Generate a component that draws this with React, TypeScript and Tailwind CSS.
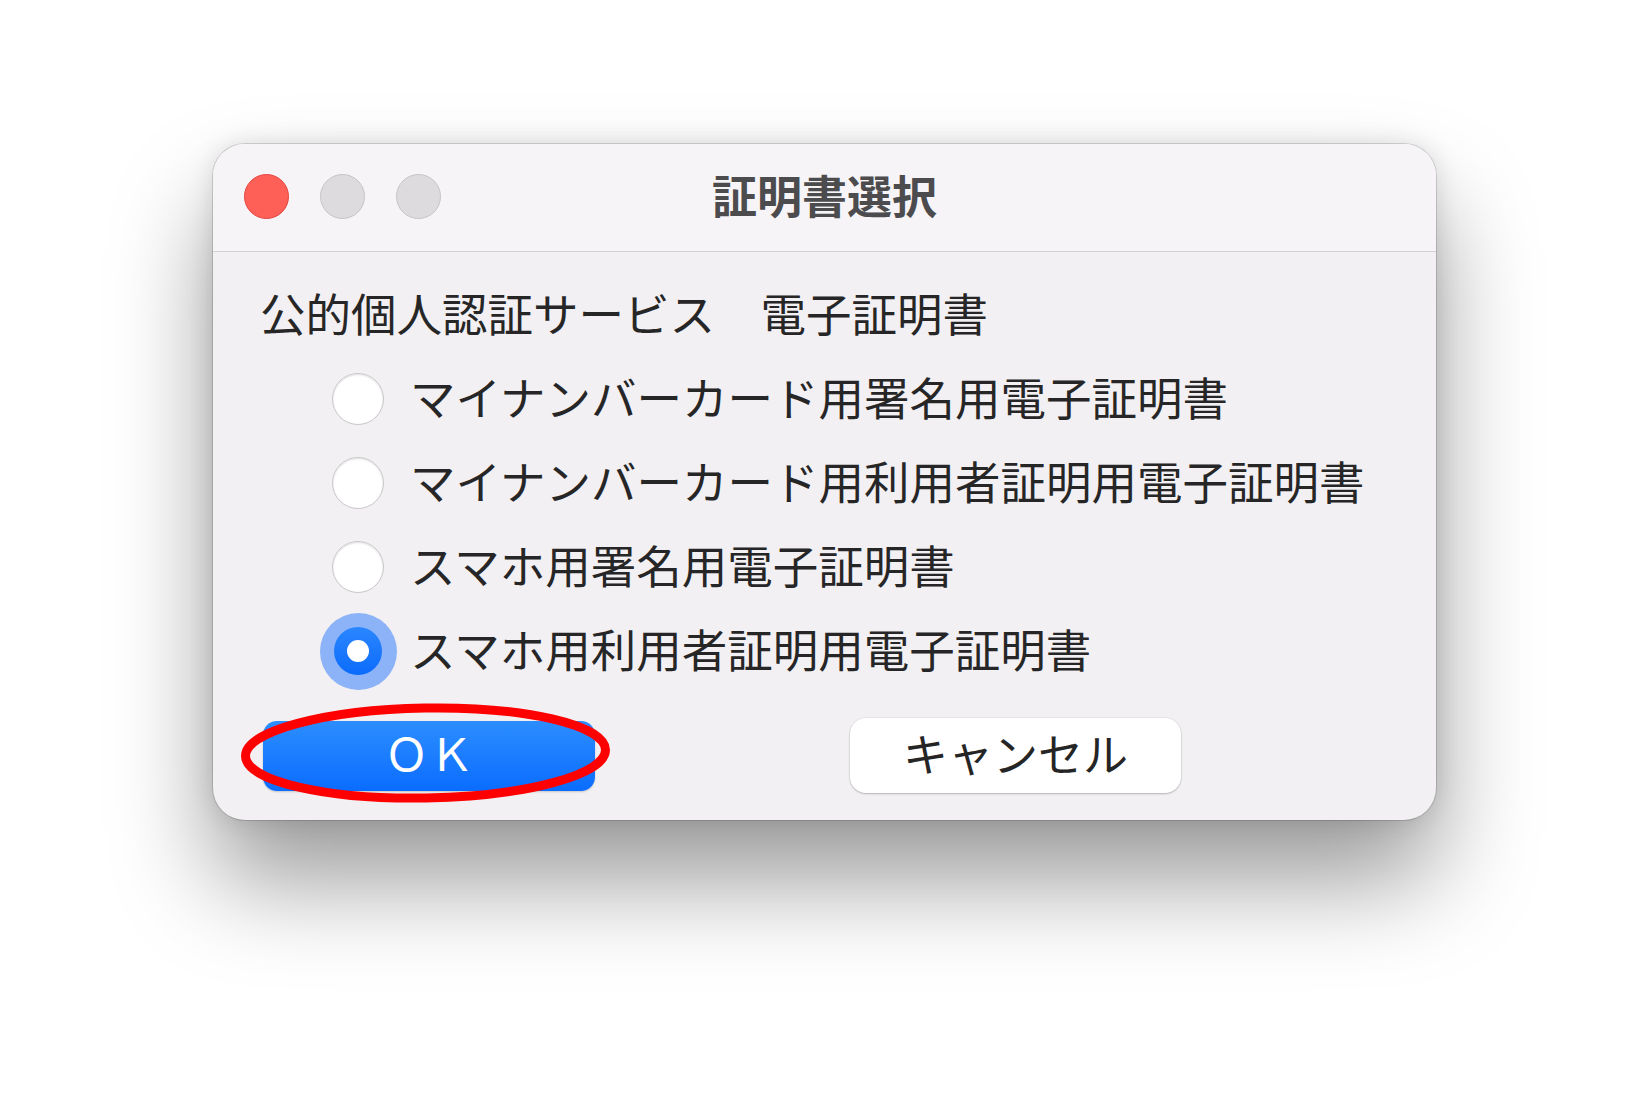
const jp = "font-['Noto_Sans_CJK_JP','Noto_Sans',sans-serif]";

const options = [
  "マイナンバーカード用署名用電子証明書",
  "マイナンバーカード用利用者証明用電子証明書",
  "スマホ用署名用電子証明書",
  "スマホ用利用者証明用電子証明書",
];

function Radio({ checked }: { checked: boolean }) {
  if (checked) {
    return (
      <span className="flex h-[77px] w-[77px] items-center justify-center rounded-full bg-[#7aa8f7]/85">
        <span className="flex h-[48px] w-[48px] items-center justify-center rounded-full bg-gradient-to-b from-[#2a86ff] to-[#0a6bfb]">
          <span className="h-[22px] w-[22px] rounded-full bg-white" />
        </span>
      </span>
    );
  }
  return (
    <span className="h-[52px] w-[52px] rounded-full border-[1.5px] border-[#c9c7ca] bg-white shadow-[inset_0_1px_2px_rgba(0,0,0,0.12)]" />
  );
}

function Light({ color }: { color: "red" | "gray" }) {
  return (
    <span
      className={
        color === "red"
          ? "h-[45px] w-[45px] rounded-full border border-[#e2463f] bg-[#fe5f57]"
          : "h-[45px] w-[45px] rounded-full border border-[#c6c4c7] bg-[#dddbde]"
      }
    />
  );
}

export default function App() {
  return (
    <div className={`min-h-[1103px] w-full bg-white pl-[213px] pt-[144px] ${jp}`}>
      <div className="w-[1223px] overflow-hidden rounded-[32px] bg-[#f2f0f3] shadow-[0_60px_100px_rgba(0,0,0,0.4),0_0_24px_rgba(0,0,0,0.12),0_0_0_1px_rgba(0,0,0,0.14)]">
        {/* title bar */}
        <div className="relative flex h-[108px] items-center border-b border-[#d3d1d4] bg-[#f6f4f7] pl-[31px]">
          <div className="flex gap-[31px] pb-[2px]">
            <Light color="red" />
            <Light color="gray" />
            <Light color="gray" />
          </div>
          <h1 className="absolute inset-x-0 top-[19px] text-center text-[45px] font-bold leading-[64px] text-[#4c4b4d]">
            証明書選択
          </h1>
        </div>

        <div className="pl-[47px] pt-[21px]">
          <p className="flex h-[84px] items-center pb-[5px] text-[45.5px] text-[#272627]">
            公的個人認証サービス　電子証明書
          </p>
          {options.map((label, i) => (
            <div key={label} className="flex h-[84px] items-center">
              <span className="ml-[59px] flex w-[78px] items-center justify-center">
                <Radio checked={i === 3} />
              </span>
              <span className="ml-[13px] pb-[6px] text-[45.5px] text-[#272627]">{label}</span>
            </div>
          ))}

          <div className="mt-[25px] flex items-center pb-[27px] pl-[3px]">
            <div className="relative">
              <button className="flex h-[70px] w-[332px] items-center justify-center rounded-[14px] bg-gradient-to-b from-[#2c8dff] to-[#0a6cff] pb-[8px] text-[45px] text-white shadow-[0_1px_2px_rgba(0,0,0,0.18)]">
                ＯＫ
              </button>
              <svg
                className="pointer-events-none absolute left-[-23px] top-[-18px]"
                width="371"
                height="100"
                viewBox="0 0 371 100"
              >
                <ellipse
                  cx="185.5"
                  cy="50"
                  rx="180"
                  ry="45"
                  fill="none"
                  stroke="#ff0000"
                  strokeWidth="9"
                  transform="rotate(-1 185.5 50)"
                />
              </svg>
            </div>
            <button className="ml-[255px] flex h-[75px] w-[331px] items-center justify-center rounded-[16px] bg-white pb-[6px] text-[45px] text-[#262526] shadow-[0_1px_2px_rgba(0,0,0,0.22),0_0_0_1px_rgba(0,0,0,0.04)]">
              キャンセル
            </button>
          </div>
        </div>
      </div>
    </div>
  );
}
